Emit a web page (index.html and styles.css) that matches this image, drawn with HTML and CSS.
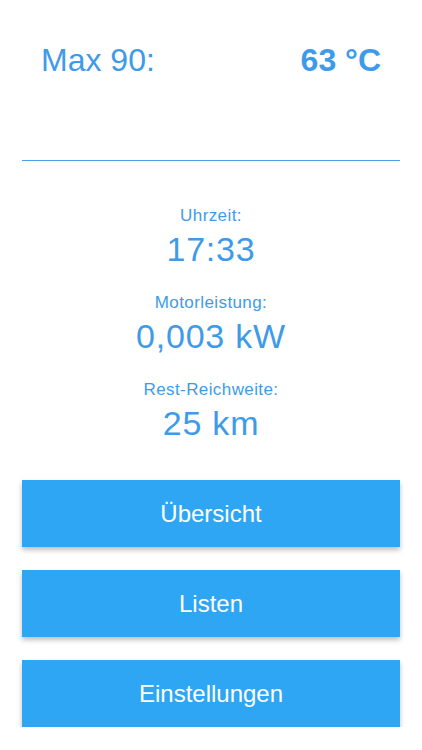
FILE: index.html
```html
<!DOCTYPE html>
<html lang="de">
<head>
    <meta charset="UTF-8">
    <meta name="viewport" content="width=device-width, initial-scale=1.0">
    <title>Dashboard</title>
    <link rel="stylesheet" href="styles.css">
</head>
<body>
    <div class="screen">
        <div class="temp-row">
            <span class="temp-label">Max 90:</span>
            <span class="temp-value">63 °C</span>
        </div>

        <div class="divider"></div>

        <div class="readings">
            <div class="reading">
                <div class="reading-label">Uhrzeit:</div>
                <div class="reading-value">17:33</div>
            </div>
            <div class="reading">
                <div class="reading-label">Motorleistung:</div>
                <div class="reading-value">0,003 kW</div>
            </div>
            <div class="reading">
                <div class="reading-label">Rest-Reichweite:</div>
                <div class="reading-value">25 km</div>
            </div>
        </div>

        <div class="menu">
            <button class="menu-btn">Übersicht</button>
            <button class="menu-btn">Listen</button>
            <button class="menu-btn">Einstellungen</button>
        </div>
    </div>
</body>
</html>
```

FILE: styles.css
```css
* {
    margin: 0;
    padding: 0;
    box-sizing: border-box;
    font-family: "Liberation Sans", Arial, sans-serif;
}

body {
    background-color: #ffffff;
    color: #3d9be9;
}

.screen {
    display: flex;
    flex-direction: column;
}

.temp-row {
    display: flex;
    justify-content: space-between;
    padding: 42px 41px 0;
    font-size: 32px;
    line-height: 36px;
}

.temp-value {
    font-weight: bold;
}

.divider {
    height: 1px;
    margin: 82px 22px 0;
    background-color: #4aa0e8;
}

.readings {
    display: flex;
    flex-direction: column;
    gap: 24px;
    margin-top: 45px;
    text-align: center;
}

.reading-label {
    font-size: 17px;
    line-height: 20px;
    letter-spacing: 0.4px;
}

.reading-value {
    margin-top: 3px;
    font-size: 34px;
    line-height: 40px;
    letter-spacing: 0.8px;
}

.menu {
    display: flex;
    flex-direction: column;
    gap: 23px;
    margin: 37px 22px 0;
}

.menu-btn {
    height: 67px;
    border: none;
    background-color: #2ea6f3;
    color: white;
    font-size: 24px;
    box-shadow: 0 3px 5px rgba(0, 0, 0, 0.25);
    cursor: pointer;
}
```
